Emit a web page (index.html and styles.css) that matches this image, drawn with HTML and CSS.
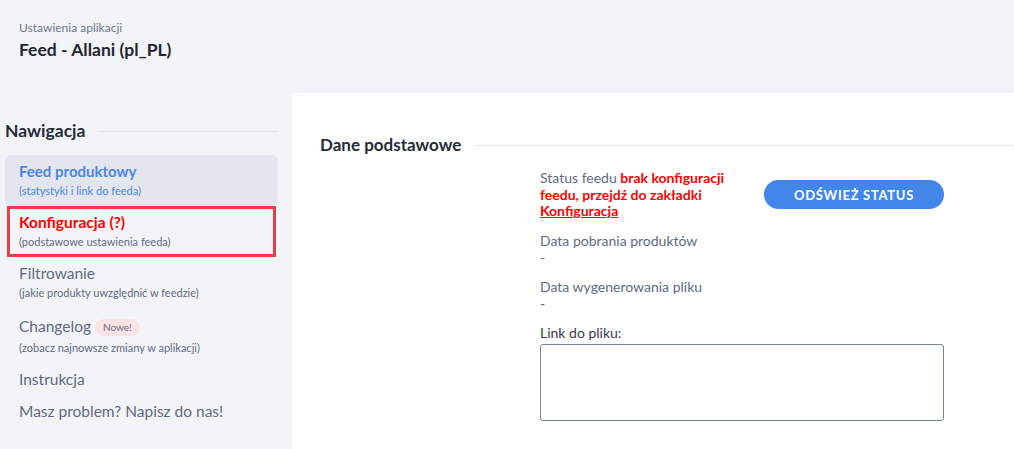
FILE: index.html
```html
<!DOCTYPE html>
<html lang="pl">
  <head>
    <meta charset="UTF-8" />
    <title>Feed - Allani (pl_PL)</title>
    <link rel="stylesheet" href="styles.css">
  </head>
  <body>
    <div class="header">
      <p class="crumb">Ustawienia aplikacji</p>
      <h1 class="title">Feed - Allani (pl_PL)</h1>
    </div>
    <div class="layout">
      <div class="sidebar">
        <div class="section-head">
          <h2>Nawigacja</h2>
          <span class="rule"></span>
        </div>
        <ul class="nav">
          <li class="active">
            <p class="nav-title">Feed produktowy</p>
            <p class="nav-sub">(statystyki i link do feeda)</p>
          </li>
          <li class="warn">
            <p class="nav-title">Konfiguracja (?)</p>
            <p class="nav-sub">(podstawowe ustawienia feeda)</p>
          </li>
          <li>
            <p class="nav-title">Filtrowanie</p>
            <p class="nav-sub">(jakie produkty uwzględnić w feedzie)</p>
          </li>
          <li class="badged">
            <p class="nav-title">Changelog <span class="badge">Nowe!</span></p>
            <p class="nav-sub">(zobacz najnowsze zmiany w aplikacji)</p>
          </li>
          <li class="single">
            <p class="nav-title">Instrukcja</p>
          </li>
          <li class="single">
            <p class="nav-title">Masz problem? Napisz do nas!</p>
          </li>
        </ul>
      </div>
      <div class="main">
        <div class="section-head main-head">
          <h2>Dane podstawowe</h2>
          <span class="rule"></span>
        </div>
        <div class="content">
          <div class="status-row">
            <p class="status">Status feedu <strong>brak konfiguracji feedu, przejdź do zakładki <a href="#">Konfiguracja</a></strong></p>
            <button class="btn">Odśwież status</button>
          </div>
          <div class="field">
            <p class="label">Data pobrania produktów</p>
            <p class="value">-</p>
          </div>
          <div class="field">
            <p class="label">Data wygenerowania pliku</p>
            <p class="value">-</p>
          </div>
          <div class="field">
            <p class="label dark">Link do pliku:</p>
            <textarea class="link-box"></textarea>
          </div>
        </div>
      </div>
    </div>
  </body>
</html>
```

FILE: styles.css
```css
* {
  margin: 0;
  padding: 0;
  list-style: none;
  box-sizing: border-box;
}
html,
body {
  height: 100%;
}
body {
  background-color: #f3f4f8;
  font-family: Lato, "Open Sans", sans-serif;
  color: #5f6a84;
  display: flex;
  flex-direction: column;
}

.header {
  padding: 19px 19px 0;
  height: 93px;
}
.header .crumb {
  font-size: 12px;
  line-height: 18px;
  color: #6c7690;
}
.header .title {
  font-size: 17.5px;
  font-weight: 700;
  line-height: 24px;
  margin-top: 1px;
  color: #1f2533;
}

.layout {
  flex: 1;
  display: flex;
}

.section-head {
  display: flex;
  align-items: center;
  gap: 14px;
}
.section-head h2 {
  font-size: 17.5px;
  font-weight: 700;
  line-height: 20px;
  color: #252b3b;
}
.section-head .rule {
  flex: 1;
  height: 1px;
  background-color: #e3e5ec;
}

.sidebar {
  width: 292px;
  padding: 28px 14px 0 5px;
}
.nav {
  margin-top: 14px;
}
.nav li {
  padding: 6px 14px 7px;
  border-radius: 6px;
}
.nav li.active {
  background-color: #e4e6ef;
}
.nav li.warn {
  margin: 0 2px;
  padding: 3px 9px 4px;
  border: 3px solid #e3404a;
  border-radius: 0;
}
.nav li.single {
  padding-bottom: 6px;
}
.nav-title {
  font-size: 15.5px;
  line-height: 20px;
  color: #5f6a84;
}
.nav-sub {
  font-size: 11px;
  line-height: 16px;
  margin-top: 2px;
  color: #5f6a84;
}
.active .nav-title {
  font-size: 15px;
  font-weight: 700;
  color: #4a86e8;
}
.active .nav-sub {
  color: #4a86e8;
}
.warn .nav-title {
  font-size: 15.5px;
  font-weight: 700;
  color: #ff0000;
}
.badged .nav-title {
  line-height: 24px;
}
.badge {
  display: inline-block;
  vertical-align: 1px;
  padding: 0 8px;
  border-radius: 9px;
  font-size: 10px;
  line-height: 17px;
  background-color: #fce3e6;
  color: #6a6f82;
}

.main {
  flex: 1;
  background-color: #fff;
  padding-top: 42px;
}
.main-head {
  padding-left: 28px;
}
.main-head h2 {
  font-size: 17px;
}
.content {
  width: 404px;
  margin: 15px 0 0 248px;
}
.status-row {
  display: flex;
  align-items: center;
  gap: 24px;
}
.status {
  width: 200px;
  font-size: 14px;
  line-height: 16.5px;
}
.status strong {
  color: #ff0000;
  font-weight: 700;
}
.status a {
  color: #ff0000;
}
.btn {
  width: 180px;
  height: 29px;
  border: none;
  border-radius: 15px;
  background-color: #4286ea;
  color: #fff;
  font-family: inherit;
  font-size: 13px;
  font-weight: 700;
  letter-spacing: 0.7px;
  text-transform: uppercase;
}
.field {
  margin-top: 12px;
}
.label,
.value {
  font-size: 14px;
  line-height: 17px;
}
.label.dark {
  color: #353b4d;
}
.link-box {
  display: block;
  width: 404px;
  height: 77px;
  margin-top: 3px;
  border: 1px solid #78839c;
  border-radius: 3px;
  resize: none;
}
```
